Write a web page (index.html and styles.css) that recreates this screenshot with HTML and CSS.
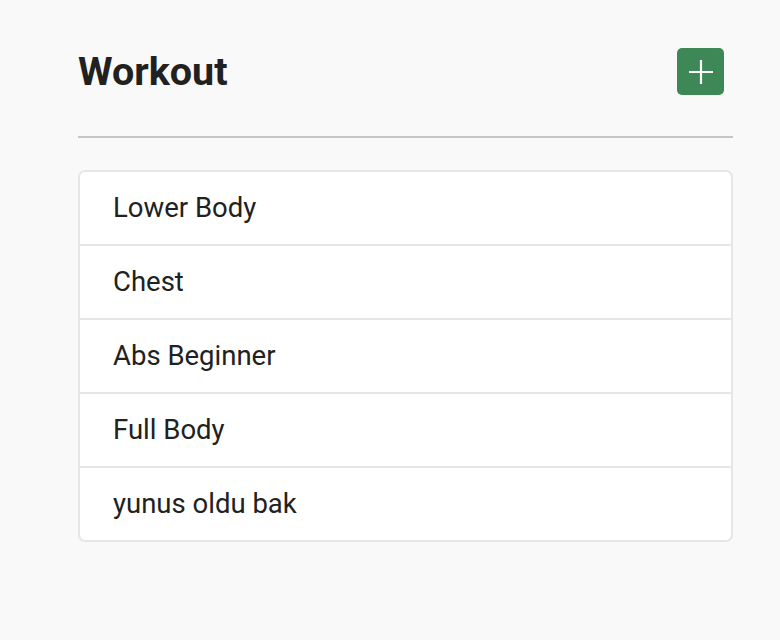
FILE: index.html
```html
<!DOCTYPE html>
<html>
<head>
<meta charset="utf-8">
<link rel="stylesheet" href="styles.css">
</head>
<body>
<main class="page">
  <header class="header">
    <h1 class="title">Workout</h1>
    <button class="add-btn" aria-label="Add">
      <svg width="24" height="24" viewBox="0 0 24 24"><path d="M12 0v24M0 12h24" stroke="#fff" stroke-width="2.2" fill="none"/></svg>
    </button>
  </header>
  <hr class="divider">
  <ul class="list">
    <li class="item">Lower Body</li>
    <li class="item">Chest</li>
    <li class="item">Abs Beginner</li>
    <li class="item">Full Body</li>
    <li class="item">yunus oldu bak</li>
  </ul>
</main>
</body>
</html>
```
FILE: styles.css
```css
html, body {
  margin: 0;
  padding: 0;
  background: #f9f9f9;
  font-family: Roboto, "Liberation Sans", sans-serif;
  color: #212121;
}
.page {
  width: 655px;
  margin-left: 78px;
  padding-top: 48px;
}
.header {
  display: flex;
  justify-content: space-between;
  align-items: flex-start;
  padding-right: 9px;
}
.title {
  margin: 0;
  font-size: 39.5px;
  font-weight: 700;
  line-height: 47px;
  color: #212121;
}
.add-btn {
  width: 47px;
  height: 47px;
  border: none;
  border-radius: 5px;
  background: #3e8857;
  display: flex;
  align-items: center;
  justify-content: center;
  padding: 0;
}
.divider {
  margin: 41px 0 0 0;
  border: none;
  border-top: 2px solid #c6c6c6;
}
.list {
  list-style: none;
  margin: 32px 0 0 0;
  padding: 0;
  background: #fff;
  border: 2px solid #e6e6e6;
  border-radius: 7px;
}
.item {
  height: 72px;
  box-sizing: border-box;
  display: flex;
  align-items: center;
  padding: 0 0 2px 33px;
  font-size: 27.5px;
  border-top: 2px solid #e6e6e6;
}
.item:first-child {
  border-top: none;
  height: 72px;
}
.item + .item {
  height: 74px;
}
```
